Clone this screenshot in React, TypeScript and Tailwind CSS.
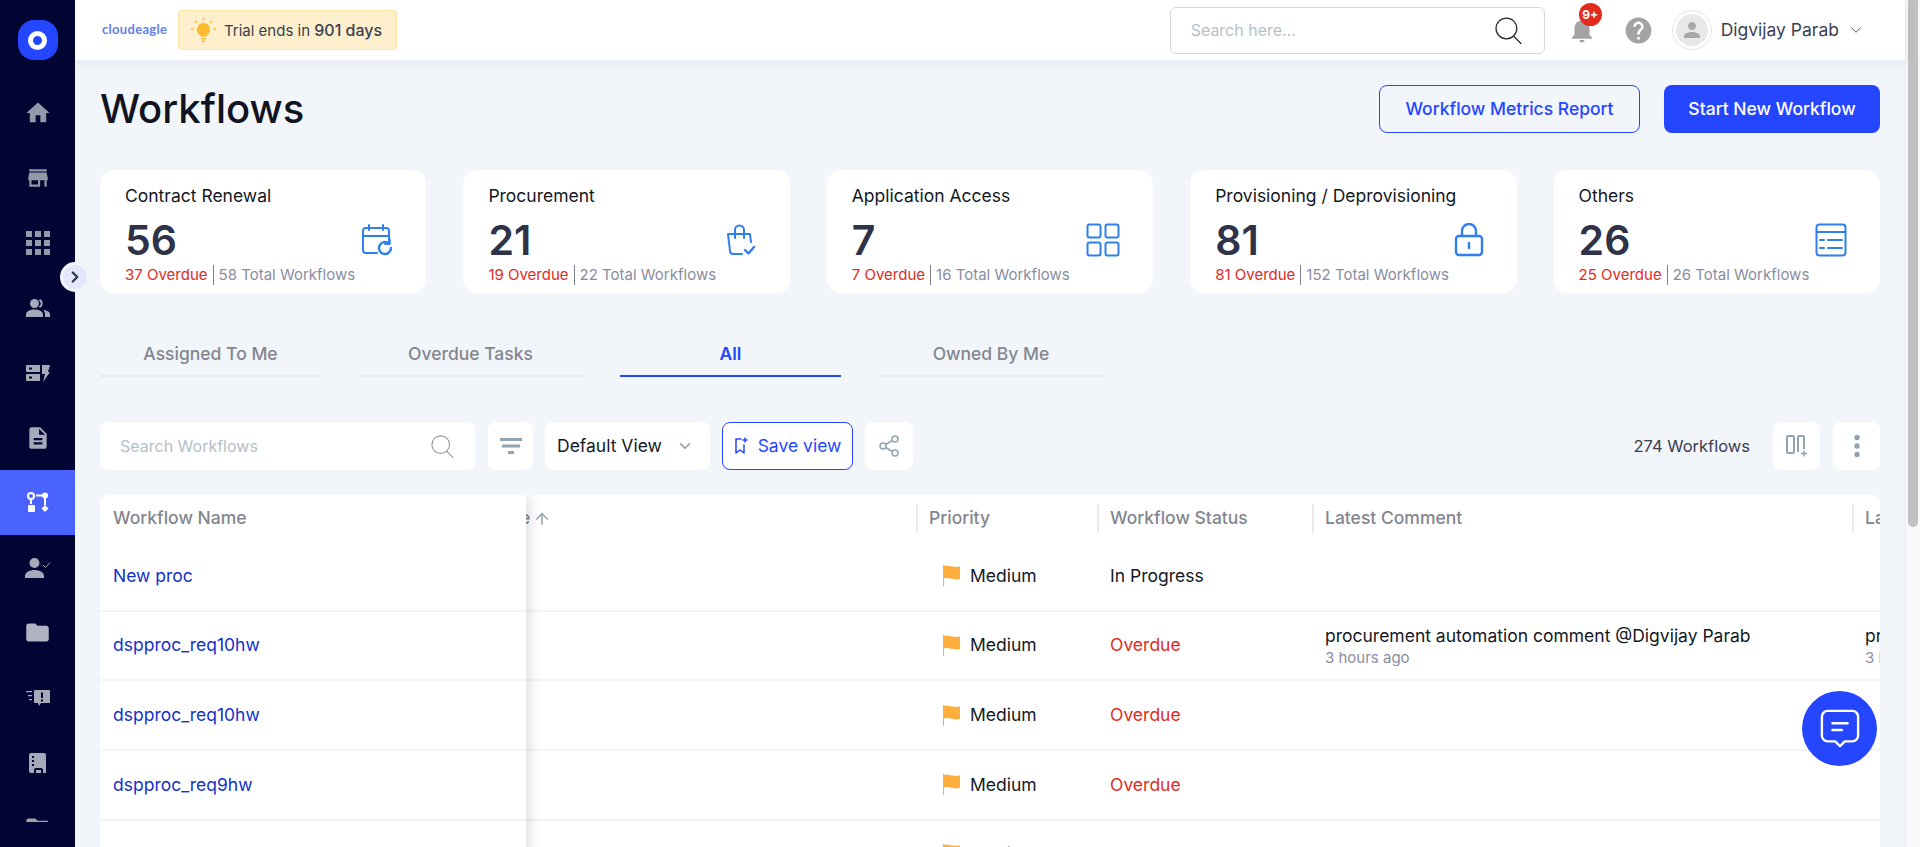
import type { ReactNode } from "react";
import { ArrowUp, ChevronDown, ChevronRight, Share2 } from "lucide-react";
import {
  MdApps,
  MdDescription,
  MdFolder,
  MdHelp,
  MdHome,
  MdNotifications,
  MdPerson,
  MdStore,
} from "react-icons/md";

const stats = [
  { title: "Contract Renewal", count: 56, overdue: 37, total: 58, icon: <CalendarRefreshIcon /> },
  { title: "Procurement", count: 21, overdue: 19, total: 22, icon: <BagCheckIcon /> },
  { title: "Application Access", count: 7, overdue: 7, total: 16, icon: <GridIcon /> },
  { title: "Provisioning / Deprovisioning", count: 81, overdue: 81, total: 152, icon: <LockIcon /> },
  { title: "Others", count: 26, overdue: 25, total: 26, icon: <TableIcon /> },
];

const tabs = [
  { label: "Assigned To Me", width: "w-[221px]" },
  { label: "Overdue Tasks", width: "w-[223px]" },
  { label: "All", width: "w-[221px]" },
  { label: "Owned By Me", width: "w-[224px]" },
];

const rows = [
  { name: "New proc", status: "In Progress", comment: false },
  { name: "dspproc_req10hw", status: "Overdue", comment: true },
  { name: "dspproc_req10hw", status: "Overdue", comment: false },
  { name: "dspproc_req9hw", status: "Overdue", comment: false },
  { name: "dspproc_req9hw", status: "Overdue", comment: false },
];

function CalendarRefreshIcon() {
  return (
    <svg width="32" height="32" viewBox="0 0 32 32" fill="none" stroke="#2f80ed" strokeWidth="2" strokeLinecap="round" strokeLinejoin="round">
      <path d="M16 29H5a3 3 0 0 1-3-3V7a3 3 0 0 1 3-3h20a3 3 0 0 1 3 3v10" />
      <path d="M2 12h26M8 1v5M22 1v5" />
      <path d="M30 24a6 6 0 1 1-2-4.500" strokeWidth="2.400" />
      <path d="M28.500 15.500v4.200h-4.200" strokeWidth="2.400" />
    </svg>
  );
}

function BagCheckIcon() {
  return (
    <svg width="32" height="34" viewBox="0 0 32 34" fill="none" stroke="#2f80ed" strokeWidth="2" strokeLinecap="round" strokeLinejoin="round">
      <path d="M17 31H8a3 3 0 0 1-3-3L3 11h22l1 8" />
      <path d="M10 15V7a4.500 4.500 0 0 1 9 0v8" />
      <path d="M20 27l3.500 3.500L29 24" strokeWidth="2.400" />
    </svg>
  );
}

function GridIcon() {
  return (
    <svg width="34" height="34" viewBox="0 0 34 34" fill="none" stroke="#2f80ed" strokeWidth="2">
      <rect x="1.500" y="1.500" width="13" height="13" rx="2" />
      <rect x="19.500" y="1.500" width="13" height="13" rx="2" />
      <rect x="1.500" y="19.500" width="13" height="13" rx="2" />
      <rect x="19.500" y="19.500" width="13" height="13" rx="2" />
    </svg>
  );
}

function LockIcon() {
  return (
    <svg width="30" height="34" viewBox="0 0 30 34" fill="none" stroke="#2f80ed" strokeWidth="2.400" strokeLinecap="round">
      <rect x="2" y="13" width="26" height="19" rx="3" />
      <path d="M8 13V8a7 7 0 0 1 14 0v5" />
      <path d="M15 20v5" />
    </svg>
  );
}

function TableIcon() {
  return (
    <svg width="32" height="34" viewBox="0 0 32 34" fill="none" stroke="#2f80ed" strokeWidth="2" strokeLinecap="round">
      <rect x="1.500" y="1.500" width="29" height="31" rx="3" />
      <path d="M1.500 9h29M5 17h4M13 17h14M5 25h4M13 25h14" />
    </svg>
  );
}

function LensIcon({ size, color }: { size: number; color: string }) {
  return (
    <svg width={size} height={size} viewBox="0 0 26 26" fill="none" stroke={color} strokeWidth="1.200" strokeLinecap="round">
      <circle cx="11" cy="11" r="10" />
      <path d="M18 18.500l7 7" />
    </svg>
  );
}

function BulbIcon() {
  return (
    <svg width="25" height="25" viewBox="0 0 25 25" fill="#fbb92d" className="shrink-0">
      <path d="M12.500 5a6.500 6.500 0 0 1 4 11.600c-.6.500-1 1.200-1 2H9.500c0-.8-.4-1.500-1-2a6.500 6.500 0 0 1 4-11.600z" />
      <path d="M10 20h5v1.500h-5zM11 22.500h3V24h-3z" />
      <path d="M12.500 0v2.500M4.500 3l1.500 2M20.500 3L19 5M0 11h2.500M22.500 11H25" fill="none" stroke="#fbb92d" strokeWidth="1.500" />
    </svg>
  );
}

function PeopleIcon() {
  return (
    <svg width="24" height="18" viewBox="0 0 24 18" fill="#a6aab8">
      <circle cx="8.500" cy="4.500" r="4.500" />
      <path d="M0 18v-2.500C0 12 4.500 10.500 8.500 10.500S17 12 17 15.500V18z" />
      <path d="M13.500 .8a4.200 4.200 0 0 1 0 7.400" fill="none" stroke="#a6aab8" strokeWidth="2" />
      <path d="M17.500 10.800c3 .6 6.500 1.800 6.500 4.700V18h-5v-2.500c0-1.800-.5-3.400-1.500-4.700z" />
    </svg>
  );
}

function ToggleFlowIcon() {
  return (
    <svg width="22" height="22" viewBox="0 0 22 22" fill="white">
      <circle cx="4" cy="4" r="3" fill="none" stroke="white" strokeWidth="2" />
      <path d="M3 7h2v5H3z" />
      <rect x="1" y="13" width="7" height="7" rx="1" />
      <circle cx="18" cy="3.500" r="3" />
      <path d="M9 2.500h6v2H9zM17 6h2v7h-2z" />
      <path d="M18 13l3.500 3.500L18 20l-3.500-3.500z" />
    </svg>
  );
}

function ServerBoltIcon() {
  return (
    <svg width="24" height="18" viewBox="0 0 24 18" fill="#a6aab8">
      <path d="M1 1h13v7H1a1 1 0 0 1-1-1V2a1 1 0 0 1 1-1zm2 2.500v2h3v-2zM1 10h13v7H1a1 1 0 0 1-1-1v-5a1 1 0 0 1 1-1zm2 2.500v2h3v-2z" fillRule="evenodd" />
      <path d="M16 1h8l-2 7h2l-7 10 2-8h-3z" />
    </svg>
  );
}

function PersonCheckIcon() {
  return (
    <svg width="26" height="20" viewBox="0 0 26 20" fill="#a6aab8">
      <circle cx="9.500" cy="5" r="5" />
      <path d="M0 20v-2c0-4 5-6 9.500-6s9.500 2 9.500 6v2z" />
      <path d="M18 7l2.500 2.500L25 4.500" fill="none" stroke="#a6aab8" strokeWidth="1" />
    </svg>
  );
}

function AlertListIcon() {
  return (
    <svg width="24" height="18" viewBox="0 0 24 18" fill="#a6aab8">
      <path d="M9 1h14a1 1 0 0 1 1 1v11a1 1 0 0 1-1 1H15l-2 3-1-3H9a1 1 0 0 1-1-1V2a1 1 0 0 1 1-1zm6 2.500v5.500h2V3.500zm0 7v2h2v-2z" fillRule="evenodd" />
      <path d="M0 2h6v1.300H0zM2 6h4v1.300H2zM3 10h3v1.300H3z" />
    </svg>
  );
}

function BookIcon() {
  return (
    <svg width="17" height="20" viewBox="0 0 17 20" fill="#a6aab8">
      <path d="M2 0h13a2 2 0 0 1 2 2v18h-3v-3a2 2 0 0 0-2-2H7a2 2 0 0 0-2 2v3H2a2 2 0 0 1-2-2V2a2 2 0 0 1 2-2zm1 3v2h2V3zm0 4v2h2V7zm0 4v2h2v-2zM7 17h5v3H7z" fillRule="evenodd" />
    </svg>
  );
}

function ColumnsPlusIcon() {
  return (
    <svg width="22" height="22" viewBox="0 0 22 22" fill="none" stroke="#92a4b1" strokeWidth="2">
      <rect x="1" y="1" width="7" height="17" rx="1" />
      <path d="M12 17V2a1 1 0 0 1 1-1h4a1 1 0 0 1 1 1v12" />
      <path d="M18 15.500v6M15 18.500h6" strokeWidth="1.500" />
    </svg>
  );
}

function DotsIcon() {
  return (
    <svg width="6" height="24" viewBox="0 0 6 24" fill="#92a4b1">
      <circle cx="3" cy="3.500" r="2.700" />
      <circle cx="3" cy="12" r="2.700" />
      <circle cx="3" cy="20.500" r="2.700" />
    </svg>
  );
}

function FilterLinesIcon() {
  return (
    <svg width="22" height="18" viewBox="0 0 22 18" fill="#92a4b1">
      <rect x="0" y="1" width="22" height="3" />
      <rect x="2" y="7.500" width="18" height="3" />
      <rect x="8" y="14" width="6" height="3" />
    </svg>
  );
}

function BookmarkPlusIcon() {
  return (
    <svg width="14" height="18" viewBox="0 0 14 18" fill="none" stroke="#2546ff" strokeWidth="1.500" strokeLinecap="round" strokeLinejoin="round">
      <path d="M7 2H2v14l4-3 4 3V8" />
      <path d="M11 1v4M9 3h4" />
    </svg>
  );
}

function FlagIcon() {
  return (
    <svg width="18" height="21" viewBox="0 0 18 21" className="shrink-0">
      <path d="M0 0h1v21H0z" fill="#fdae3c" />
      <path d="M1 1c4-1.500 8 2 16 .5V14c-7 1.500-11-2-16-.5z" fill="#fdae3c" />
    </svg>
  );
}

function ChatIcon() {
  return (
    <svg width="40" height="40" viewBox="0 0 42 42" fill="none" stroke="white" strokeWidth="2.500" strokeLinecap="round" strokeLinejoin="round">
      <path d="M8 2h26a6 6 0 0 1 6 6v20a6 6 0 0 1-6 6h-8l-5 5-5-5H8a6 6 0 0 1-6-6V8a6 6 0 0 1 6-6z" />
      <path d="M13 15h16M13 22h10" />
    </svg>
  );
}

const navIcons: ReactNode[] = [
  <MdHome size={28} color="#9299a9" />,
  <MdStore size={26} color="#9299a9" />,
  <MdApps size={36} color="#9299a9" />,
  <PeopleIcon />,
  <ServerBoltIcon />,
  <MdDescription size={26} color="#a6aab8" />,
  <ToggleFlowIcon />,
  <PersonCheckIcon />,
  <MdFolder size={27} color="#b0b3c2" />,
  <AlertListIcon />,
  <BookIcon />,
  <MdFolder size={27} color="#a3a3a8" />,
];

function Sidebar() {
  return (
    <aside className="relative z-30 w-[75px] shrink-0 bg-[#000534]">
      <div className="flex h-[80px] items-center justify-center">
        <div className="flex h-10 w-10 items-center justify-center rounded-[16px] bg-[#2546ff]">
          <div className="h-[19px] w-[19px] rounded-full border-[5px] border-white" />
        </div>
      </div>
      <div className="h-[742px] overflow-hidden">
        {navIcons.map((icon, i) => (
          <div
            key={i}
            className={`flex h-[65px] items-center justify-center ${i === 6 ? "bg-[#4a63ff]" : ""}`}
          >
            {icon}
          </div>
        ))}
      </div>
      <div className="absolute left-[60px] top-[262px] flex h-[30px] w-[30px] items-center justify-center rounded-full border-[3px] border-[#f4f5fb] bg-[#e3e7fb]">
        <ChevronRight size={18} strokeWidth={3} color="#30344f" />
      </div>
    </aside>
  );
}

function TopBar() {
  return (
    <header className="relative z-20 flex h-[60px] shrink-0 items-center bg-white pl-[27px] shadow-[0_2px_14px_rgba(30,40,90,0.07)]">
      <span className="w-[76px] text-[13px] font-bold tracking-[0.3px] text-[#6480ea] [font-family:Lato,sans-serif]">
        cloudeagle
      </span>
      <div className="flex h-10 w-[219px] items-center gap-[8px] rounded-[3px] border border-[#fde4a8] bg-[#fff0cd] pl-[12px]">
        <BulbIcon />
        <span className="text-[15px] text-[#3a3f51]">
          Trial ends in <span className="text-[16px] font-medium">901 days</span>
        </span>
      </div>
      <div className="ml-auto flex h-[47px] w-[375px] items-center justify-between rounded-[6px] border border-[#d3d8e2] bg-white pl-[20px] pr-[22px]">
        <span className="text-[16px] text-[#b6c0c8]">Search here...</span>
        <LensIcon size={27} color="#2b2b2b" />
      </div>
      <div className="relative ml-[22px] flex w-[30px] justify-center">
        <MdNotifications size={30} color="#a3a3a3" />
        <span className="absolute -top-[12px] left-[12px] flex h-[23px] w-[23px] items-center justify-center rounded-full bg-[#e22b1c] text-[12px] font-bold text-white">
          9+
        </span>
      </div>
      <MdHelp size={31} color="#a3a3a3" className="ml-[26px]" />
      <div className="ml-[18px] flex h-10 w-10 items-center justify-center rounded-full border border-[#e5e5e5]">
        <div className="flex h-8 w-8 items-center justify-center rounded-full bg-[#e8e8e8]">
          <MdPerson size={24} color="#a8a8a8" />
        </div>
      </div>
      <span className="ml-[9px] text-[17.5px] text-[#3a3f51]">Digvijay Parab</span>
      <ChevronDown size={18} strokeWidth={1.200} color="#3a3f51" className="ml-[8px]" />
      <div className="w-[40px]" />
    </header>
  );
}

function StatCard({ title, count, overdue, total, icon }: (typeof stats)[number]) {
  return (
    <div className="flex h-[123px] flex-col rounded-[14px] bg-white px-[25px] pt-[14px]">
      <div className="text-[17.5px] leading-6 text-[#141824]">{title}</div>
      <div className="mt-[12px] flex h-10 items-center justify-between pr-[8px]">
        <span className="text-[41px] font-semibold leading-none text-[#2e3348]">{count}</span>
        {icon}
      </div>
      <div className="mt-[5px] flex items-center text-[15px] leading-5">
        <span className="text-[#e22b1c]">{overdue} Overdue</span>
        <span className="mx-[5px] h-5 w-px bg-[#7d8290]" />
        <span className="text-[#8a8d9f]">{total} Total Workflows</span>
      </div>
    </div>
  );
}

function IconBox({ className, children }: { className: string; children: ReactNode }) {
  return (
    <div className={`flex h-12 items-center justify-center rounded-[8px] bg-white ${className}`}>
      {children}
    </div>
  );
}

function Toolbar() {
  return (
    <div className="mt-[45px] flex h-12 items-center">
      <div className="flex h-12 w-[375px] items-center justify-between rounded-[8px] bg-white pl-[20px] pr-[21px]">
        <span className="text-[16px] text-[#b6c0c8]">Search Workflows</span>
        <LensIcon size={23} color="#8e98a3" />
      </div>
      <IconBox className="ml-[13px] w-[45px]">
        <FilterLinesIcon />
      </IconBox>
      <div className="ml-[12px] flex h-12 w-[165px] items-center justify-between rounded-[8px] bg-white pl-[12px] pr-[16px]">
        <span className="text-[17.5px] text-[#141824]">Default View</span>
        <ChevronDown size={18} color="#8e98a3" />
      </div>
      <div className="ml-[12px] flex h-12 w-[131px] items-center justify-center gap-[10px] rounded-[8px] border border-[#2546ff] bg-white">
        <BookmarkPlusIcon />
        <span className="text-[17.5px] text-[#2546ff]">Save view</span>
      </div>
      <IconBox className="ml-[12px] w-[48px]">
        <Share2 size={24} strokeWidth={1.500} color="#92a4b1" />
      </IconBox>
      <span className="ml-auto text-[16.5px] text-[#3a3f51]">274 Workflows</span>
      <IconBox className="ml-[23px] w-[47px]">
        <ColumnsPlusIcon />
      </IconBox>
      <IconBox className="ml-[13px] w-[47px]">
        <DotsIcon />
      </IconBox>
    </div>
  );
}

function HeaderCell({ label }: { label: string }) {
  return (
    <div className="flex h-[47px] items-center">
      <div className="flex h-[29px] w-full items-center border-l-2 border-[#e9ebef] pl-[11px] text-[17.5px] font-medium whitespace-nowrap text-[#83868f]">
        {label}
      </div>
    </div>
  );
}

function WorkflowTable() {
  return (
    <div className="mt-[25px] flex overflow-hidden rounded-t-[8px] bg-white">
      <div className="relative z-10 w-[426px] shrink-0 bg-white shadow-[4px_0_12px_rgba(0,0,0,0.12)]">
        <div className="flex h-[47px] items-center pl-[13px] text-[17.5px] font-medium text-[#83868f]">
          Workflow Name
        </div>
        {rows.map((row, i) => (
          <div key={i} className="flex h-[69.7px] items-center border-b-2 border-[#f3f4f6] pl-[13px] text-[17.5px] text-[#1231c8]">
            {row.name}
          </div>
        ))}
      </div>
      <div className="min-w-0 flex-1 overflow-hidden">
        <div className="grid w-[1700px] grid-cols-[390px_181px_215px_540px_374px]">
          <div className="flex h-[47px] items-center text-[17.5px] font-medium text-[#83868f]">
            <span className="-ml-[6px]">e</span>
            <ArrowUp size={18} color="#92a4b1" className="ml-[3px]" />
          </div>
          <HeaderCell label="Priority" />
          <HeaderCell label="Workflow Status" />
          <HeaderCell label="Latest Comment" />
          <HeaderCell label="Last Comment" />
        </div>
        {rows.map((row, i) => (
          <div key={i} className="grid h-[69.7px] w-[1700px] grid-cols-[390px_181px_215px_540px_374px] items-center border-b-2 border-[#f3f4f6] text-[17.5px] text-[#141824]">
            <div />
            <div className="flex items-center gap-[9px] pl-[27px]">
              <FlagIcon />
              Medium
            </div>
            <div className={`pl-[13px] ${row.status === "Overdue" ? "text-[#e22b1c]" : ""}`}>{row.status}</div>
            <div className="pl-[13px]">
              {row.comment && (
                <>
                  <div className="leading-6">procurement automation comment @Digvijay Parab</div>
                  <div className="text-[15px] leading-5 text-[#8a8d9f]">3 hours ago</div>
                </>
              )}
            </div>
            <div className="pl-[13px]">
              {row.comment && (
                <>
                  <div className="leading-6">procurement automation comment</div>
                  <div className="text-[15px] leading-5 text-[#8a8d9f]">3 hours ago</div>
                </>
              )}
            </div>
          </div>
        ))}
      </div>
    </div>
  );
}

export default function App() {
  return (
    <div className="relative flex h-[847px] overflow-hidden bg-[#f2f5fa] [font-family:Inter,sans-serif]">
      <Sidebar />
      <main className="flex min-w-0 flex-1 flex-col">
        <TopBar />
        <div className="px-[25px]">
          <div className="mt-[25px] flex h-12 items-center">
            <h1 className="text-[40px] font-medium text-[#111420]">Workflows</h1>
            <button className="ml-auto h-12 w-[261px] rounded-[8px] border border-[#2546ff] text-[17.5px] font-medium text-[#2546ff]">
              Workflow Metrics Report
            </button>
            <button className="ml-[24px] h-12 w-[216px] rounded-[8px] bg-[#2546ff] text-[17.5px] font-medium text-white">
              Start New Workflow
            </button>
          </div>
          <div className="mt-[37px] grid grid-cols-5 gap-[37px]">
            {stats.map((s) => (
              <StatCard key={s.title} {...s} />
            ))}
          </div>
          <div className="mt-[41px] flex gap-[38px]">
            {tabs.map((tab) => (
              <div
                key={tab.label}
                className={`flex h-[43px] items-center justify-center border-b-2 text-[17.5px] ${tab.width} ${
                  tab.label === "All" ? "border-[#2546ff] font-semibold text-[#2546ff]" : "border-[#e7e9ee] font-medium text-[#83868f]"
                }`}
              >
                {tab.label}
              </div>
            ))}
          </div>
          <Toolbar />
          <WorkflowTable />
        </div>
      </main>
      <div className="w-[15px] shrink-0 border-l border-[#ececec] bg-[#f9f9f9] px-[2px]">
        <div className="h-[527px] rounded-b-[6px] bg-[#c1c1c1]" />
      </div>
      <div className="absolute left-[1802px] top-[691px] z-40 flex h-[75px] w-[75px] items-center justify-center rounded-full bg-[#2546ff]">
        <ChatIcon />
      </div>
    </div>
  );
}
